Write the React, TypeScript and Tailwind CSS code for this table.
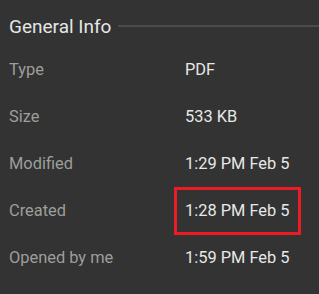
import React from "react";

const rows = [
  { label: "Type", value: "PDF" },
  { label: "Size", value: "533 KB" },
  { label: "Modified", value: "1:29 PM Feb 5" },
  { label: "Created", value: "1:28 PM Feb 5", marked: true },
  { label: "Opened by me", value: "1:59 PM Feb 5" },
];

export default function App() {
  return (
    <div className="w-[319px] h-[294px] bg-[#323332] overflow-hidden font-['Roboto',sans-serif]">
      {/* header with rule */}
      <div className="flex items-start pl-[9px] pt-[15px] h-[46px]">
        <span className="text-[19px] leading-[24px] text-[#e6e6e6] whitespace-nowrap">General Info</span>
        <div className="flex-1 h-[2px] bg-[#4a4b4a] ml-[7px] mt-[10px]" />
      </div>

      <div className="pl-[9px]">
        {rows.map((r) => (
          <div key={r.label} className="grid grid-cols-[176px_1fr] h-[47px] items-center text-[16.4px] leading-[20px]">
            <span className="text-[#9e9e9c]">{r.label}</span>
            <span className="relative text-[#e8e8e8]">
              {r.value}
              {r.marked && (
                <span className="absolute left-[-11px] top-[-14px] w-[127px] h-[48px] border-[3px] border-[#ed1c24]" />
              )}
            </span>
          </div>
        ))}
      </div>
    </div>
  );
}
